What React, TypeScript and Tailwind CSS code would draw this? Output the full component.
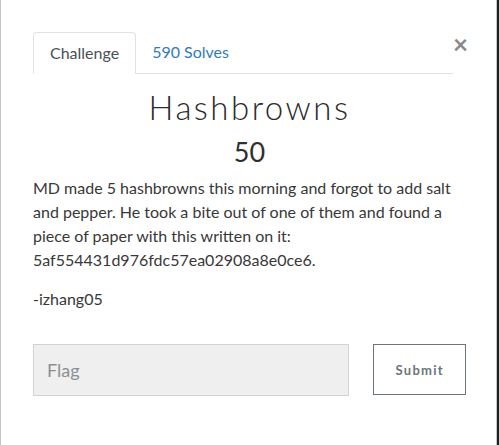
const App: React.FC = () => {
  return (
    <div className="h-[445px] w-full bg-[#1e1e1e] font-['Lato','Liberation_Sans',sans-serif]">
      <div className="h-[445px] w-[497px] border-x border-[#c6c6c6] bg-white pl-8 pr-[30px] pt-8 text-[#333]">
        <div className="flex items-start">
          <ul className="flex flex-1 border-b border-[#dee2e6] text-[16px] leading-6">
            <li className="-mb-px rounded-t border border-[#dee2e6] border-b-white px-4 py-2 text-[#495057]">
              Challenge
            </li>
            <li className="px-4 py-2 text-[#337ab7]">590 Solves</li>
          </ul>
          <button className="-mt-px w-[13px] text-[26px] leading-none font-bold text-[#888]">
            ×
          </button>
        </div>

        <h2 className="mt-[14px] text-center text-[33px] leading-[1.2] font-light tracking-[0.075em] text-[#2b2b2b]">
          Hashbrowns
        </h2>
        <h3 className="mt-[8px] text-center text-[27px] leading-[1.2] text-[#2f2f2f]">
          50
        </h3>

        <p className="mt-[8px] text-[16px] leading-6 text-[#383838]">
          MD made 5 hashbrowns this morning and forgot to add salt and pepper. He took a
          bite out of one of them and found a piece of paper with this written on it:
          5af554431d976fdc57ea02908a8e0ce6.
        </p>
        <p className="mt-[15px] text-[16px] leading-6 text-[#383838]">-izhang05</p>

        <div className="mt-[33px] flex items-start">
          <input
            placeholder="Flag"
            className="h-[52px] w-[318px] border border-[#ced4da] bg-[#efefef] px-[13px] text-[18px] placeholder:text-[#8a8f94]"
          />
          <button className="ml-6 h-[51px] w-[93px] border border-[#6c757d] bg-white pt-[3px] text-[13px] font-bold tracking-[0.1em] text-[#6c757d]">
            Submit
          </button>
        </div>
      </div>
    </div>
  );
};

export default App;
